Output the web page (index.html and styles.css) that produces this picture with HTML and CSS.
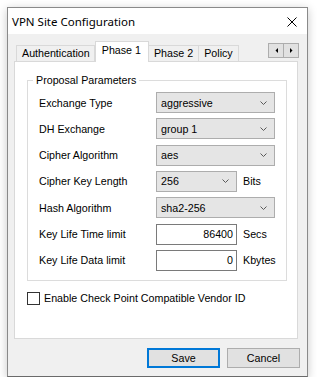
FILE: index.html
```html
<!DOCTYPE html>
<html>
<head>
<meta charset="utf-8">
<link rel="stylesheet" href="styles.css">
</head>
<body>
<div class="window">
  <div class="titlebar">
    <span class="title">VPN Site Configuration</span>
    <svg class="close" width="10" height="10" viewBox="0 0 10 10"><path d="M0.5 0.5L9.5 9.5M9.5 0.5L0.5 9.5" stroke="#000" stroke-width="1" fill="none"/></svg>
  </div>
  <div class="content">
    <div class="tabs">
      <div class="tab first">Authentication</div>
      <div class="tab active">Phase 1</div>
      <div class="tab">Phase 2</div>
      <div class="tab">Policy</div>
      <div class="spin">
        <span class="spin-btn"><svg width="3" height="5" viewBox="0 0 3 5"><path d="M3 0V5L0.5 2.5Z" fill="#000"/></svg></span>
        <span class="spin-btn"><svg width="3" height="5" viewBox="0 0 3 5"><path d="M0 0V5L2.5 2.5Z" fill="#000"/></svg></span>
      </div>
    </div>
    <div class="panel">
      <fieldset class="group">
        <legend>Proposal Parameters</legend>
        <div class="grid">
          <span class="lbl">Exchange Type</span>
          <div class="combo wide"><span>aggressive</span><svg class="chev" width="7" height="4" viewBox="0 0 7 4"><path d="M0.5 0.5L3.5 3.5L6.5 0.5" stroke="#5a5a5a" fill="none"/></svg></div>

          <span class="lbl">DH Exchange</span>
          <div class="combo wide"><span>group 1</span><svg class="chev" width="7" height="4" viewBox="0 0 7 4"><path d="M0.5 0.5L3.5 3.5L6.5 0.5" stroke="#5a5a5a" fill="none"/></svg></div>

          <span class="lbl">Cipher Algorithm</span>
          <div class="combo wide"><span>aes</span><svg class="chev" width="7" height="4" viewBox="0 0 7 4"><path d="M0.5 0.5L3.5 3.5L6.5 0.5" stroke="#5a5a5a" fill="none"/></svg></div>

          <span class="lbl">Cipher Key Length</span>
          <div class="combo"><span>256</span><svg class="chev" width="7" height="4" viewBox="0 0 7 4"><path d="M0.5 0.5L3.5 3.5L6.5 0.5" stroke="#5a5a5a" fill="none"/></svg></div>
          <span class="unit">Bits</span>

          <span class="lbl">Hash Algorithm</span>
          <div class="combo wide"><span>sha2-256</span><svg class="chev" width="7" height="4" viewBox="0 0 7 4"><path d="M0.5 0.5L3.5 3.5L6.5 0.5" stroke="#5a5a5a" fill="none"/></svg></div>

          <span class="lbl">Key Life Time limit</span>
          <div class="field">86400</div>
          <span class="unit">Secs</span>

          <span class="lbl">Key Life Data limit</span>
          <div class="field">0</div>
          <span class="unit">Kbytes</span>
        </div>
      </fieldset>
      <div class="check"><span class="box"></span><span>Enable Check Point Compatible Vendor ID</span></div>
    </div>
    <div class="buttons">
      <div class="btn default">Save</div>
      <div class="btn">Cancel</div>
    </div>
  </div>
</div>
</body>
</html>
```

FILE: styles.css
```css
html, body {
  margin: 0;
  padding: 0;
  background: #ffffff;
}
body {
  padding: 7px 0 0 7px;
  font-family: "Liberation Sans", Arial, sans-serif;
  font-size: 10.7px;
  color: #000;
}
.window {
  width: 301px;
  height: 370px;
  box-sizing: border-box;
  border: 1px solid #8a8a8a;
  border-bottom-color: #6a6a6a;
  background: #f0f0f0;
  box-shadow: 0 2px 9px rgba(0, 0, 0, 0.22);
  display: flex;
  flex-direction: column;
}
.titlebar {
  height: 26px;
  background: #ffffff;
  display: flex;
  align-items: center;
  padding: 0 10px 0 4px;
}
.title {
  font-family: "Noto Sans", "Open Sans", sans-serif;
  font-size: 11.5px;
  flex: 1;
  padding-top: 1px;
}
.close {
  display: block;
  margin-top: 1px;
}
.content {
  padding: 7px 9px 0 6px;
  flex: 1;
  display: flex;
  flex-direction: column;
}
.tabs {
  display: flex;
  align-items: flex-end;
  height: 21px;
  padding-left: 2px;
  margin-bottom: -1px;
  position: relative;
  z-index: 1;
}
.tab {
  height: 16px;
  box-sizing: border-box;
  border: 1px solid #d9d9d9;
  border-bottom: none;
  background: #f0f0f0;
  padding: 0 5px;
  line-height: 15px;
  white-space: nowrap;
  margin-bottom: 1px;
}
.tab.first {
  padding: 0 4px 0 5px;
}
.tab + .tab {
  border-left: none;
}
.tab.active {
  height: 21px;
  background: #ffffff;
  padding: 0 7px 0 6px;
  line-height: 16px;
  margin-bottom: 0;
  border-left: 1px solid #d9d9d9;
}
.tab.active + .tab {
  border-left: none;
}
.spin {
  margin-left: auto;
  margin-right: -1px;
  align-self: flex-start;
  margin-top: 2px;
  display: flex;
}
.spin-btn {
  width: 16px;
  height: 15px;
  box-sizing: border-box;
  border: 1px solid #adadad;
  background: #e1e1e1;
  display: flex;
  align-items: center;
  justify-content: center;
}
.spin-btn + .spin-btn {
  border-left: none;
  width: 15px;
}
.panel {
  height: 278px;
  box-sizing: border-box;
  border: 1px solid #d9d9d9;
  background: #ffffff;
  padding: 0 10px 0 12px;
}
.group {
  margin: 12px 0 0 0;
  padding: 6px 11px 9px 11px;
  border: 1px solid #dcdcdc;
  min-width: 0;
}
.group legend {
  margin-left: -6px;
  padding: 0 3px;
  line-height: 12px;
}
.grid {
  display: grid;
  grid-template-columns: 117px 81px 38px;
  grid-auto-rows: 21px;
  row-gap: 5.33px;
  align-items: center;
}
.lbl {
  grid-column: 1;
}
.combo {
  height: 21px;
  box-sizing: border-box;
  border: 1px solid #adadad;
  background: #e5e5e5;
  display: flex;
  align-items: center;
  padding: 0 7px 0 4px;
}
.combo span {
  flex: 1;
}
.combo.wide {
  grid-column: 2 / 4;
}
.chev {
  display: block;
}
.field {
  height: 21px;
  box-sizing: border-box;
  border: 1px solid #7a7a7a;
  background: #ffffff;
  display: flex;
  align-items: center;
  justify-content: flex-end;
  padding-right: 3px;
}
.unit {
  padding-left: 6px;
}
.check {
  display: flex;
  align-items: center;
  margin-top: 11px;
  gap: 4px;
}
.box {
  width: 13px;
  height: 13px;
  box-sizing: border-box;
  border: 1px solid #333333;
  background: #ffffff;
}
.buttons {
  margin-top: 9px;
  display: flex;
  justify-content: flex-end;
  gap: 7px;
  margin-right: -2px;
}
.btn {
  width: 73px;
  height: 20px;
  box-sizing: border-box;
  border: 1px solid #adadad;
  background: #e1e1e1;
  display: flex;
  align-items: center;
  justify-content: center;
}
.btn.default {
  border: 2px solid #0078d7;
}
```
